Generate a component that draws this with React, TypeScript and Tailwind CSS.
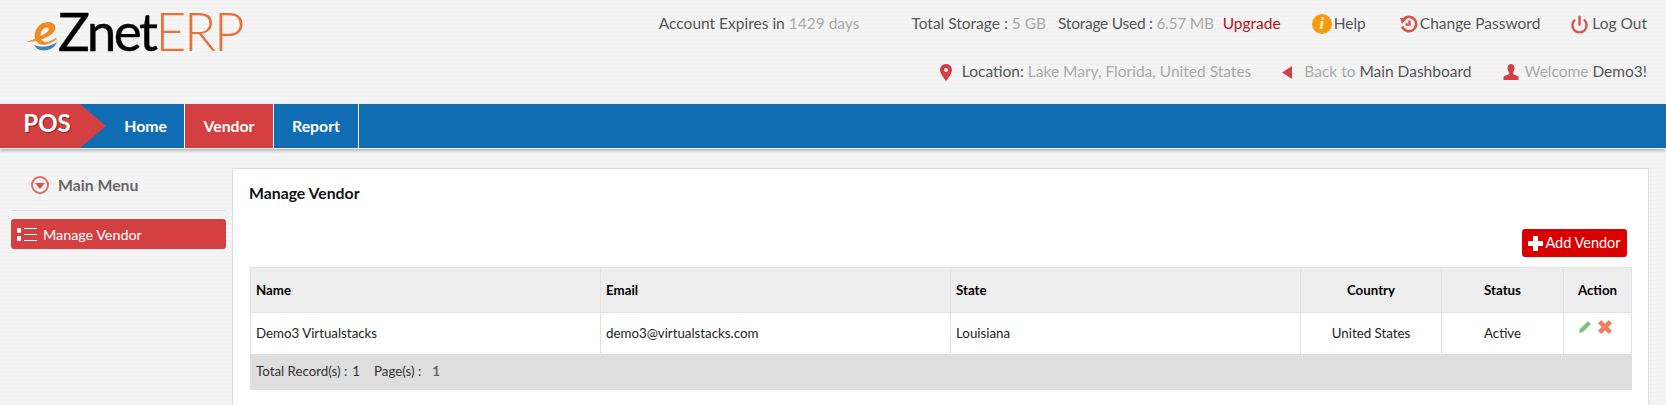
import { Power } from 'lucide-react'

const Logo = () => (
  <div className="flex items-start">
    <svg width="34" height="32" viewBox="0 0 34 32" className="mt-[20px] shrink-0">
      <path d="M0 22 C9 22 19 19 26 14 C32 9 30 2 22 2 C13 2 7 11 9 20 L15 19 C13 13 17 7 21 7.5 C24 8 23 11 20 13 C14 17 7 20 0 22Z" fill="#ef8b22" />
      <path d="M10 20 C12 27 22 26 31 19 L30 18 C24 22 18 24 15 19Z" fill="#ef8b22" />
      <path d="M8 25 C15 28 24 27 31 22 C28 31 13 34 8 25Z" fill="#3d7fc0" />
    </svg>
    <span className="ml-[-2px] mt-[1px] text-[53px] leading-[60px] tracking-[-2.5px] text-black font-normal [-webkit-text-stroke:0.4px_#000]">Znet</span>
    <span className="mt-[1px] text-[53px] leading-[60px] tracking-[-2.2px] text-[#e9703b] font-light">ERP</span>
  </div>
)

const Header = () => (
  <header className="flex h-[103px] justify-between pl-[26px] pr-[19px] text-[15.5px] text-[#555]">
    <Logo />
    <div className="flex flex-col items-end">
      <div className="flex h-[48px] items-center">
        <span>Account Expires in <span className="text-[#aaa]">1429 days</span></span>
        <span className="ml-[52px]">Total Storage : <span className="text-[#aaa]">5 GB</span></span>
        <span className="ml-[12px] tracking-[-0.25px]">Storage Used : <span className="text-[#aaa]">6.57 MB</span></span>
        <span className="ml-[9px] text-[#c00d1e]">Upgrade</span>
        <span className="ml-[31px] flex h-[20px] w-[20px] items-center justify-center rounded-full bg-[#f7990c] text-[16px] font-bold italic text-[#fff3d0]" style={{ fontFamily: '"Liberation Serif", serif' }}>i</span>
        <span className="ml-[2px]">Help</span>
        <svg width="18" height="18" viewBox="0 0 18 18" className="ml-[34px] shrink-0">
          <path d="M4 3.8 A7.2 7.2 0 1 1 2.2 11.5" fill="none" stroke="#d9534f" strokeWidth="2.6" />
          <path d="M0 3 L7.5 3 L2 9Z" fill="#d9534f" />
          <path d="M9.5 5.5 V9.5 H5.5" fill="none" stroke="#d9534f" strokeWidth="2.4" />
        </svg>
        <span className="ml-[2px]">Change Password</span>
        <Power className="ml-[30px] text-[#d9534f]" size={19} strokeWidth={3} />
        <span className="ml-[3px]">Log Out</span>
      </div>
      <div className="flex h-[48px] items-center">
        <svg width="12" height="17" viewBox="0 0 12 17" className="shrink-0">
          <path fillRule="evenodd" d="M6 0 C2.5 0 0 2.6 0 6 C0 10 6 17 6 17 C6 17 12 10 12 6 C12 2.6 9.5 0 6 0Z M6 4 A2 2 0 1 1 6 8 A2 2 0 1 1 6 4Z" fill="#d43f47" />
        </svg>
        <span className="ml-[10px]">Location: <span className="text-[#aaa]">Lake Mary, Florida, United States</span></span>
        <svg width="10" height="13" viewBox="0 0 10 13" className="ml-[31px] shrink-0">
          <path d="M10 0 V13 L0 6.5Z" fill="#d43f47" />
        </svg>
        <span className="ml-[12px] text-[#aaa]">Back to <span className="text-[#555]">Main Dashboard</span></span>
        <svg width="16" height="16" viewBox="0 0 16 16" className="ml-[32px] shrink-0">
          <path d="M8 0 C5.6 0 4.5 1.8 4.5 4 C4.5 6 5.3 7.4 6 8.3 V10 L0.5 12.5 V16 H15.5 V12.5 L10 10 V8.3 C10.7 7.4 11.5 6 11.5 4 C11.5 1.8 10.4 0 8 0Z" fill="#d43f47" />
        </svg>
        <span className="ml-[5px] text-[#aaa]">Welcome <span className="text-[#555]">Demo3!</span></span>
      </div>
    </div>
  </header>
)

const NavBar = () => (
  <nav className="flex h-[46px] border-y border-[#e8eef4] bg-[#106db3] shadow-[0_2px_3px_rgba(0,0,0,0.25)]">
    <div className="relative flex w-[80px] items-center justify-center pb-[6px] pl-[14px] bg-[#d43f42] text-[24px] font-bold text-white [text-shadow:1px_1px_1px_rgba(0,0,0,0.4)]">
      POS
      <div className="absolute left-[80px] top-0 h-0 w-0 border-y-[22px] border-l-[26px] border-y-transparent border-l-[#d43f42]" />
    </div>
    <div className="flex w-[105px] items-center justify-end border-r border-white pr-[17px] text-[15.8px] font-bold text-white">Home</div>
    <div className="flex w-[89px] items-center justify-center border-r border-white bg-[#d43f42] text-[15.8px] font-bold text-white">Vendor</div>
    <div className="flex w-[85px] items-center justify-center border-r border-white text-[15.8px] font-bold text-white">Report</div>
  </nav>
)

const Sidebar = () => (
  <aside className="w-[232px] shrink-0 pl-[11px] pr-[6px]">
    <div className="mx-[1px] flex h-[43px] items-center border-b border-[#ddd] pb-[9px] pl-[19px] text-[15.8px] font-bold text-[#666]">
      <span className="flex h-[18px] w-[18px] items-center justify-center rounded-full border-2 border-[#df6a6a]">
        <span className="mt-[3px] border-x-[5px] border-t-[6px] border-x-transparent border-t-[#d9534f]" />
      </span>
      <span className="ml-[9px]">Main Menu</span>
    </div>
    <div className="mt-[8px] flex h-[30px] items-center rounded-[3px] bg-[#d43f42] pl-[6px] pt-[1px] text-[14.3px] text-white">
      <svg width="20" height="16" viewBox="0 0 20 16" className="shrink-0">
        <rect x="0" y="1" width="4" height="5" rx="1" fill="#fff" />
        <rect x="0" y="9" width="4" height="5" rx="1" fill="#fff" />
        <rect x="7" y="1" width="13" height="1" fill="#fff" />
        <rect x="7" y="7" width="13" height="1" fill="#fff" />
        <rect x="7" y="13" width="13" height="1" fill="#fff" />
      </svg>
      <span className="ml-[6px]">Manage Vendor</span>
    </div>
  </aside>
)

const VendorTable = () => (
  <div className="ml-[17px] mr-[16px] text-[13.3px] text-[#222]">
    <table className="w-[1382px] table-fixed border-collapse">
      <thead>
        <tr className="h-[45px] border border-[#e2e2e2] bg-[#eee] text-black">
          <th className="w-[350px] border-r border-[#e2e2e2] pl-[5px] pt-[1px] text-left font-bold">Name</th>
          <th className="w-[350px] border-r border-[#e2e2e2] pl-[5px] pt-[1px] text-left font-bold">Email</th>
          <th className="w-[350px] border-r border-[#e2e2e2] pl-[5px] pt-[1px] text-left font-bold">State</th>
          <th className="w-[141px] border-r border-[#e2e2e2] pt-[1px] font-bold">Country</th>
          <th className="w-[122px] border-r border-[#e2e2e2] pt-[1px] font-bold">Status</th>
          <th className="pt-[1px] font-bold">Action</th>
        </tr>
      </thead>
      <tbody>
        <tr className="h-[41px] border-x border-[#e2e2e2]">
          <td className="border-r border-[#e2e2e2] pl-[5px] pt-[2px]">Demo3 Virtualstacks</td>
          <td className="border-r border-[#e2e2e2] pl-[5px] pt-[2px]">demo3@virtualstacks.com</td>
          <td className="border-r border-[#e2e2e2] pl-[5px] pt-[2px]">Louisiana</td>
          <td className="border-r border-[#e2e2e2] pt-[2px] text-center">United States</td>
          <td className="border-r border-[#e2e2e2] pt-[2px] text-center">Active</td>
          <td className="align-top">
            <div className="mt-[7px] flex items-center justify-center gap-[6px] pr-[5px]">
              <svg width="13" height="14" viewBox="0 0 13 14">
                <path d="M9 1 L12 4 L4 12 L0 13 L1 9Z" fill="#7fbf87" />
              </svg>
              <svg width="14" height="14" viewBox="0 0 13 13">
                <path d="M3 0 L6.5 3.5 L10 0 L13 3 L9.5 6.5 L13 10 L10 13 L6.5 9.5 L3 13 L0 10 L3.5 6.5 L0 3Z" fill="#ef7f5f" />
              </svg>
            </div>
          </td>
        </tr>
      </tbody>
    </table>
    <div className="flex h-[36px] w-[1382px] items-center bg-[#dedede] pl-[6px] pt-[1px] text-[#333]">
      Total Record(s) : <span className="ml-[5px]">1</span>
      <span className="ml-[14px]">Page(s) :</span>
      <span className="ml-[11px] font-bold text-[#666]">1</span>
    </div>
  </div>
)

const App = () => {
  return (
    <div className="h-[405px] overflow-hidden bg-[#f3f3f3] bg-[repeating-linear-gradient(0deg,#f1f1f1_0px,#f1f1f1_1px,#f4f4f4_1px,#f4f4f4_4px)] text-[#555]" style={{ fontFamily: 'Lato, sans-serif' }}>
      <Header />
      <NavBar />
      <div className="flex pt-[19px]">
        <Sidebar />
        <main className="h-[300px] w-[1417px] border border-[#ddd] bg-white">
          <h1 className="pl-[16px] pt-[15px] text-[15.8px] font-bold leading-[18px] text-[#111]">Manage Vendor</h1>
          <div className="mt-[27px] flex h-[28px] justify-end pr-[21px]">
            <button className="flex h-[28px] w-[105px] items-center justify-center rounded-[3px] bg-[#d90000] text-[14.5px] text-white">
              <svg width="15" height="15" viewBox="0 0 15 15" className="mr-[2px] shrink-0">
                <path d="M5 0 H10 V5 H15 V10 H10 V15 H5 V10 H0 V5 H5Z" fill="#fff" />
              </svg>
              Add Vendor
            </button>
          </div>
          <div className="mt-[10px]">
            <VendorTable />
          </div>
        </main>
      </div>
    </div>
  )
}

export default App
